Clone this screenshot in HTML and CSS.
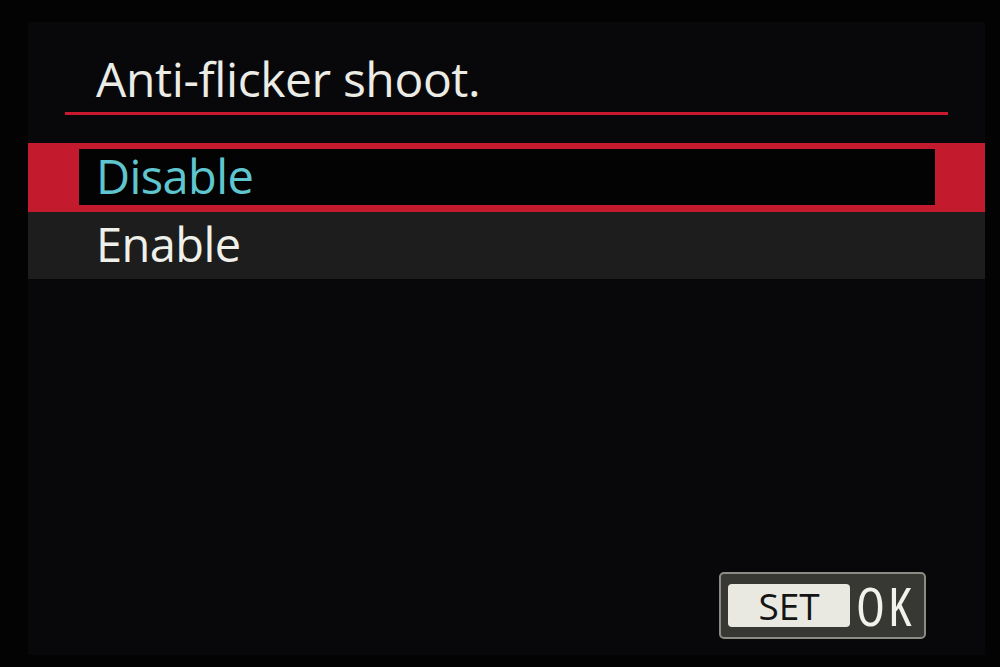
FILE: index.html
```html
<!DOCTYPE html>
<html>
<head>
<meta charset="utf-8">
<link rel="stylesheet" href="styles.css">
</head>
<body>
<div class="screen">
  <h1 class="title">Anti-flicker shoot.</h1>
  <div class="rule"></div>
  <ul class="menu">
    <li class="item selected"><span class="inner">Disable</span></li>
    <li class="item">Enable</li>
  </ul>
  <div class="footer">
    <div class="setok"><span class="set">SET</span><span class="ok">OK</span></div>
  </div>
</div>
</body>
</html>
```
FILE: styles.css
```css
html, body {
  margin: 0;
  padding: 0;
}
body {
  width: 1000px;
  height: 667px;
  background: #030303;
  overflow: hidden;
  font-family: "Open Sans", "Noto Sans", sans-serif;
}
.screen {
  box-sizing: border-box;
  margin: 22px 15px 0 28px;
  width: 957px;
  height: 633px;
  background: #08080a;
  display: flex;
  flex-direction: column;
}
.title {
  margin: 0;
  height: 90px;
  box-sizing: border-box;
  padding: 39px 0 0 68px;
  font-size: 48px;
  font-weight: 500;
  line-height: 36px;
  color: #ecece6;
  letter-spacing: -0.4px;
}
.rule {
  margin-left: 37px;
  width: 883px;
  height: 3px;
  background: #c8192f;
}
.menu {
  list-style: none;
  margin: 28px 0 0 0;
  padding: 0;
}
.item {
  box-sizing: border-box;
  height: 67px;
  padding-left: 68px;
  background: #1d1d1d;
  color: #f0f0ea;
  font-size: 47px;
  font-weight: 500;
  line-height: 64px;
  letter-spacing: -0.6px;
}
.item.selected {
  height: 69px;
  padding: 6px 50px 7px 51px;
  background: #c41a2e;
  line-height: 54px;
}
.item.selected .inner {
  display: block;
  height: 56px;
  padding-left: 17px;
  background: #030303;
  color: #5fc6cf;
}
.footer {
  margin-top: auto;
  display: flex;
  justify-content: flex-end;
  padding: 0 59px 16px 0;
}
.setok {
  box-sizing: border-box;
  width: 207px;
  height: 67px;
  border: 2px solid #8c8c84;
  border-radius: 5px;
  background: #373734;
  display: flex;
  align-items: center;
  padding: 0 0 0 7px;
}
.set {
  width: 122px;
  height: 43px;
  border-radius: 4px;
  background: #e9e9e2;
  color: #141414;
  font-size: 37px;
  font-weight: 500;
  font-stretch: 95%;
  line-height: 43px;
  text-align: center;
  letter-spacing: 0;
}
.ok {
  margin-left: 6px;
  color: #f2f2ec;
  font-size: 53px;
  font-weight: 500;
  font-stretch: 75%;
  line-height: 50px;
  letter-spacing: 3px;
}
```
